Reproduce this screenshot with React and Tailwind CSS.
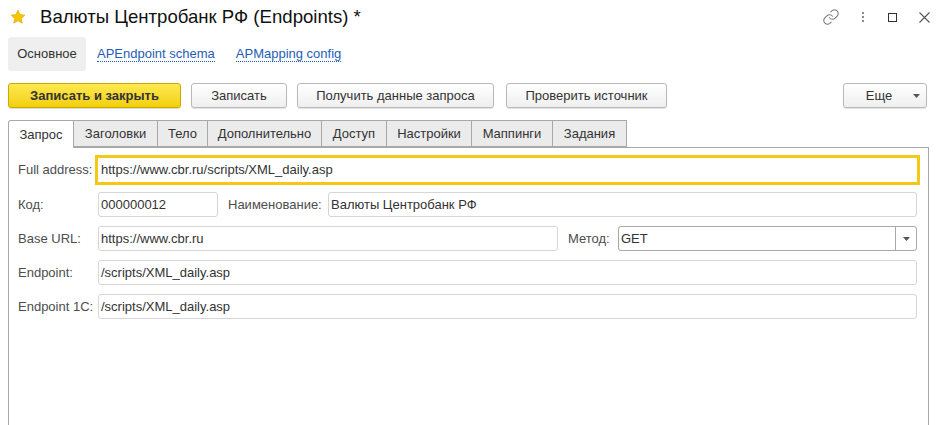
import React from "react";

const F = { fontFamily: '"Liberation Sans", Arial, sans-serif' };

function Btn({ children, className = "" }) {
  return (
    <div
      className={`h-[25px] flex items-center justify-center rounded-[3px] border border-[#b9b9b9] bg-gradient-to-b from-white to-[#efefef] shadow-[0_1px_1px_rgba(0,0,0,0.12)] text-[13px] text-[#333] ${className}`}
    >
      {children}
    </div>
  );
}

const tabs = [
  ["Запрос", 66],
  ["Заголовки", 84],
  ["Тело", 50],
  ["Дополнительно", 114],
  ["Доступ", 65],
  ["Настройки", 85],
  ["Маппинги", 81],
  ["Задания", 74],
];

function Input({ value, className = "" }) {
  return (
    <div className={`h-[25px] flex items-center rounded-[3px] border border-[#d6d6d6] bg-white pl-[2px] text-[13px] text-[#333] ${className}`}>
      {value}
    </div>
  );
}

function Label({ children, className = "" }) {
  return <div className={`text-[13px] text-[#4d4d4d] ${className}`}>{children}</div>;
}

export default function App() {
  return (
    <div style={F} className="w-[941px] h-[425px] bg-white overflow-hidden relative">
      {/* Title row */}
      <div className="h-[34px] flex items-center pl-[10px]">
        <svg width="16" height="16" viewBox="0 0 24 24">
          <path
            d="M12 1.8l3.1 6.6 7.2.9-5.3 4.9 1.4 7.1L12 17.8l-6.4 3.5 1.4-7.1-5.3-4.9 7.2-.9z"
            fill="#f7c600"
            stroke="#e0a800"
            strokeWidth="1"
            strokeLinejoin="round"
          />
        </svg>
        <div className="ml-[14px] text-[18.6px] text-[#111] leading-none">Валюты Центробанк РФ (Endpoints) *</div>
        <div className="ml-auto flex items-center h-full">
          <svg className="mr-[22px]" width="18" height="18" viewBox="0 0 24 24" fill="none" stroke="#7a7a7a" strokeWidth="1.4" strokeLinecap="round">
            <path d="M10 13a5 5 0 0 0 7.5.5l3-3a5 5 0 0 0-7-7l-1.7 1.7" />
            <path d="M14 11a5 5 0 0 0-7.5-.5l-3 3a5 5 0 0 0 7 7l1.7-1.7" />
          </svg>
          <div className="mr-[24px] flex flex-col gap-[2px]">
            <div className="w-[2px] h-[2px] bg-[#8a8a8a]" />
            <div className="w-[2px] h-[2px] bg-[#8a8a8a]" />
            <div className="w-[2px] h-[2px] bg-[#8a8a8a]" />
          </div>
          <div className="mr-[22px] w-[9px] h-[9px] border border-[#333]" />
          <svg className="mr-[11px]" width="11" height="11" viewBox="0 0 11 11" stroke="#555" strokeWidth="1.1">
            <path d="M0.5 0.5L10.5 10.5M10.5 0.5L0.5 10.5" />
          </svg>
        </div>
      </div>

      {/* Section nav */}
      <div className="mt-[3px] h-[34px] flex items-center pl-[8px] text-[13px]">
        <div className="h-full w-[78px] flex items-center justify-center rounded-[3px] bg-[#efefef] text-[#333]">Основное</div>
        <div className="ml-[11px] text-[#1f5db5] border-b border-dotted border-[#1f5db5] leading-[14px]">APEndpoint schema</div>
        <div className="ml-[21px] text-[#1f5db5] border-b border-dotted border-[#1f5db5] leading-[14px]">APMapping config</div>
      </div>

      {/* Buttons */}
      <div className="mt-[12px] flex items-center pl-[8px]">
        <div className="h-[25px] w-[173px] flex items-center justify-center rounded-[3px] border border-[#c9ab00] bg-gradient-to-b from-[#ffe94d] to-[#f2cf00] shadow-[0_1px_1px_rgba(0,0,0,0.15)] text-[13px] font-bold text-[#333]">
          Записать и закрыть
        </div>
        <Btn className="ml-[10px] w-[96px]">Записать</Btn>
        <Btn className="ml-[10px] w-[197px]">Получить данные запроса</Btn>
        <Btn className="ml-[12px] w-[161px]">Проверить источник</Btn>
        <Btn className="ml-auto mr-[14px] w-[84px] relative">
          <span className="mr-[12px]">Еще</span>
          <svg className="absolute right-[6px] top-[10px]" width="7" height="4" viewBox="0 0 7 4">
            <path d="M0 0h7L3.5 4z" fill="#555" />
          </svg>
        </Btn>
      </div>

      {/* Tabs */}
      <div className="mt-[12px] flex pl-[8px] h-[28px] relative z-10">
        {tabs.map(([t, w], i) => (
          <div
            key={t}
            style={{ width: w }}
            className={
              i === 0
                ? "h-[28px] flex items-center justify-center border border-b-0 border-[#a8a8a8] bg-white text-[13px] text-[#333] rounded-tl-[3px]"
                : "h-[27px] flex items-center justify-center border border-l-0 border-[#a8a8a8] bg-[#ebebeb] text-[13px] text-[#333]"
            }
          >
            {t}
          </div>
        ))}
      </div>

      {/* Panel */}
      <div className="-mt-[1px] ml-[8px] w-[921px] h-[300px] border border-[#a8a8a8] pl-[9px] pr-[11px] pt-[7px]">
        <div className="flex items-center h-[30px]">
          <Label className="w-[77px]">Full address:</Label>
          <div className="flex-1 h-[30px] mr-[-3px] border-[3px] border-[#f5c816] flex items-center pl-[3px] text-[13px] text-[#333]">
            https://www.cbr.ru/scripts/XML_daily.asp
          </div>
        </div>
        <div className="mt-[7px] flex items-center">
          <Label className="w-[80px]">Код:</Label>
          <Input className="w-[120px]" value="000000012" />
          <Label className="ml-[10px] w-[100px]">Наименование:</Label>
          <Input className="flex-1 border-[#a8a8a8]" value="Валюты Центробанк РФ" />
        </div>
        <div className="mt-[9px] flex items-center">
          <Label className="w-[80px]">Base URL:</Label>
          <Input className="w-[460px]" value="https://www.cbr.ru" />
          <Label className="ml-[10px] w-[50px]">Метод:</Label>
          <div className="flex-1 h-[25px] flex items-center rounded-[3px] border border-[#a8a8a8] bg-white text-[13px] text-[#333]">
            <span className="pl-[2px] flex-1">GET</span>
            <div className="w-[21px] h-full border-l border-[#a8a8a8] flex items-center justify-center">
              <svg width="7" height="4" viewBox="0 0 7 4">
                <path d="M0 0h7L3.5 4z" fill="#555" />
              </svg>
            </div>
          </div>
        </div>
        <div className="mt-[9px] flex items-center">
          <Label className="w-[80px]">Endpoint:</Label>
          <Input className="flex-1" value="/scripts/XML_daily.asp" />
        </div>
        <div className="mt-[9px] flex items-center">
          <Label className="w-[80px]">Endpoint 1C:</Label>
          <Input className="flex-1" value="/scripts/XML_daily.asp" />
        </div>
      </div>
    </div>
  );
}
